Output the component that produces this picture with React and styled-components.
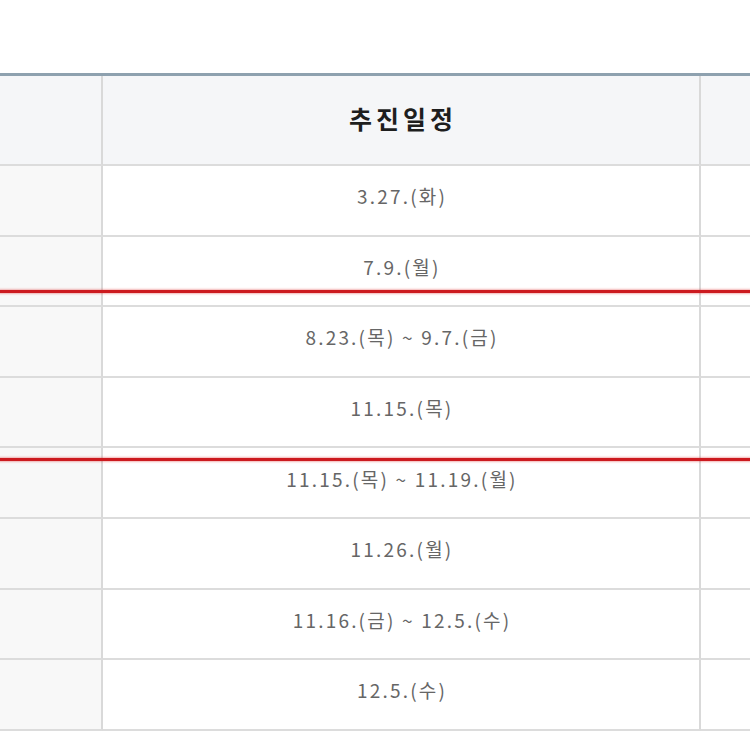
import React from "react";
import styled, { createGlobalStyle } from "styled-components";

const Global = createGlobalStyle`
  html, body { margin: 0; padding: 0; background: #fff; }
  body { font-family: "Noto Sans CJK KR", "Noto Sans", sans-serif; }
`;

const Page = styled.div`
  width: 750px;
  height: 750px;
  overflow: hidden;
  padding-top: 73px;
  box-sizing: border-box;
`;

const TableWrap = styled.div`
  position: relative;
  width: 750px;
`;

const Grid = styled.div`
  display: grid;
  grid-template-columns: 103px 598px 60px;
  grid-template-rows: 90px repeat(8, 70.6px);
  border-top: 3px solid #8ea1af;
`;

const Cell = styled.div`
  box-sizing: border-box;
  display: flex;
  align-items: center;
  justify-content: center;
  border-bottom: 2px solid #dcdcdc;
  border-right: ${(p) => (p.$last ? "none" : "2px solid #d9d9d9")};
  background: ${(p) => (p.$head ? "#f5f6f8" : p.$side ? "#f8f8f8" : "#fff")};
  color: ${(p) => (p.$head ? "#1e1e1e" : "#666")};
  font-size: ${(p) => (p.$head ? "25px" : "19px")};
  font-weight: ${(p) => (p.$head ? 700 : 400)};
  letter-spacing: ${(p) => (p.$head ? "4px" : "2.2px")};
  text-indent: ${(p) => (p.$head ? "4px" : "2px")};
  white-space: nowrap;
  padding-bottom: ${(p) => (p.$head ? "5px" : "9px")};
`;

const RedLine = styled.div`
  position: absolute;
  left: 0;
  right: 0;
  height: 3px;
  background: #cc1a1f;
  box-shadow: 0 0 2px 1px rgba(220, 40, 40, 0.35);
  top: ${(p) => p.$top}px;
`;

const dates = [
  "3.27.(화)",
  "7.9.(월)",
  "8.23.(목) ~ 9.7.(금)",
  "11.15.(목)",
  "11.15.(목) ~ 11.19.(월)",
  "11.26.(월)",
  "11.16.(금) ~ 12.5.(수)",
  "12.5.(수)",
];

export default function App() {
  return (
    <Page>
      <Global />
      <TableWrap>
        <Grid>
          <Cell $head />
          <Cell $head>추진일정</Cell>
          <Cell $head $last />
          {dates.map((d, i) => (
            <React.Fragment key={i}>
              <Cell $side />
              <Cell>{d}</Cell>
              <Cell $last />
            </React.Fragment>
          ))}
        </Grid>
        <RedLine $top={217} />
        <RedLine $top={385} />
      </TableWrap>
    </Page>
  );
}
